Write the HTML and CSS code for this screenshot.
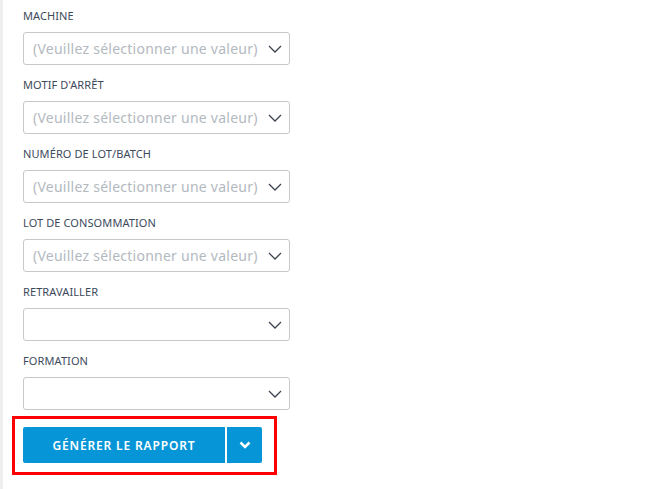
FILE: index.html
```html
<!DOCTYPE html>
<html lang="fr">
<head>
<meta charset="utf-8">
<link rel="stylesheet" href="styles.css">
</head>
<body>
<div class="page">
  <div class="strip"></div>
  <form class="form">
    <div class="field">
      <label class="label">MACHINE</label>
      <div class="select"><span class="placeholder">(Veuillez sélectionner une valeur)</span><svg class="chev" viewBox="0 0 14 8" width="14" height="8"><path d="M1 1 L7 7 L13 1" fill="none" stroke="#3c4450" stroke-width="1.3"/></svg></div>
    </div>
    <div class="field">
      <label class="label">MOTIF D'ARRÊT</label>
      <div class="select"><span class="placeholder">(Veuillez sélectionner une valeur)</span><svg class="chev" viewBox="0 0 14 8" width="14" height="8"><path d="M1 1 L7 7 L13 1" fill="none" stroke="#3c4450" stroke-width="1.3"/></svg></div>
    </div>
    <div class="field">
      <label class="label">NUMÉRO DE LOT/BATCH</label>
      <div class="select"><span class="placeholder">(Veuillez sélectionner une valeur)</span><svg class="chev" viewBox="0 0 14 8" width="14" height="8"><path d="M1 1 L7 7 L13 1" fill="none" stroke="#3c4450" stroke-width="1.3"/></svg></div>
    </div>
    <div class="field">
      <label class="label">LOT DE CONSOMMATION</label>
      <div class="select"><span class="placeholder">(Veuillez sélectionner une valeur)</span><svg class="chev" viewBox="0 0 14 8" width="14" height="8"><path d="M1 1 L7 7 L13 1" fill="none" stroke="#3c4450" stroke-width="1.3"/></svg></div>
    </div>
    <div class="field">
      <label class="label">RETRAVAILLER</label>
      <div class="select"><span class="placeholder"></span><svg class="chev" viewBox="0 0 14 8" width="14" height="8"><path d="M1 1 L7 7 L13 1" fill="none" stroke="#3c4450" stroke-width="1.3"/></svg></div>
    </div>
    <div class="field">
      <label class="label">FORMATION</label>
      <div class="select"><span class="placeholder"></span><svg class="chev" viewBox="0 0 14 8" width="14" height="8"><path d="M1 1 L7 7 L13 1" fill="none" stroke="#3c4450" stroke-width="1.3"/></svg></div>
    </div>
    <div class="highlight">
      <div class="btn-group">
        <button type="button" class="btn-main">GÉNÉRER LE RAPPORT</button>
        <button type="button" class="btn-drop"><svg viewBox="0 0 12 8" width="12" height="8"><path d="M1.5 1.5 L6 6 L10.5 1.5" fill="none" stroke="#ffffff" stroke-width="2.6"/></svg></button>
      </div>
    </div>
  </form>
</div>
</body>
</html>
```
FILE: styles.css
```css
html, body {
  margin: 0;
  padding: 0;
  background: #ffffff;
  height: 100%;
}
body {
  font-family: "Noto Sans", "Open Sans", sans-serif;
  overflow: hidden;
}
.page {
  display: flex;
  min-height: 489px;
}
.strip {
  width: 3px;
  background: #eeeeee;
  flex: none;
}
.form {
  padding: 9px 0 0 20px;
  display: flex;
  flex-direction: column;
}
.field {
  display: flex;
  flex-direction: column;
  margin-bottom: 13px;
}
.label {
  font-size: 11px;
  line-height: 14px;
  height: 14px;
  color: #3c4a5c;
  margin-bottom: 9px;
  letter-spacing: 0.1px;
}
.select {
  box-sizing: border-box;
  width: 267px;
  height: 33px;
  border: 1px solid #c8c8c8;
  border-radius: 3px;
  display: flex;
  align-items: center;
  padding: 0 7px 0 9px;
}
.placeholder {
  flex: 1;
  font-size: 14px;
  color: #b3b9c0;
  white-space: nowrap;
  letter-spacing: 0.25px;
}
.chev {
  flex: none;
}
.highlight {
  margin-left: -11px;
  margin-top: -7px;
  border: 3px solid #ff0000;
  padding: 8px 12px 9px 8px;
  align-self: flex-start;
}
.btn-group {
  display: flex;
  gap: 2px;
}
.btn-main, .btn-drop {
  border: none;
  background: #0696d7;
  color: #ffffff;
  height: 36px;
  font-family: "Noto Sans", "Open Sans", sans-serif;
  cursor: pointer;
  padding: 0;
}
.btn-main {
  width: 202px;
  border-radius: 2px 0 0 2px;
  font-size: 12px;
  font-weight: 600;
  letter-spacing: 0.85px;
}
.btn-drop {
  width: 35px;
  border-radius: 0 2px 2px 0;
  display: flex;
  align-items: center;
  justify-content: center;
}
```
